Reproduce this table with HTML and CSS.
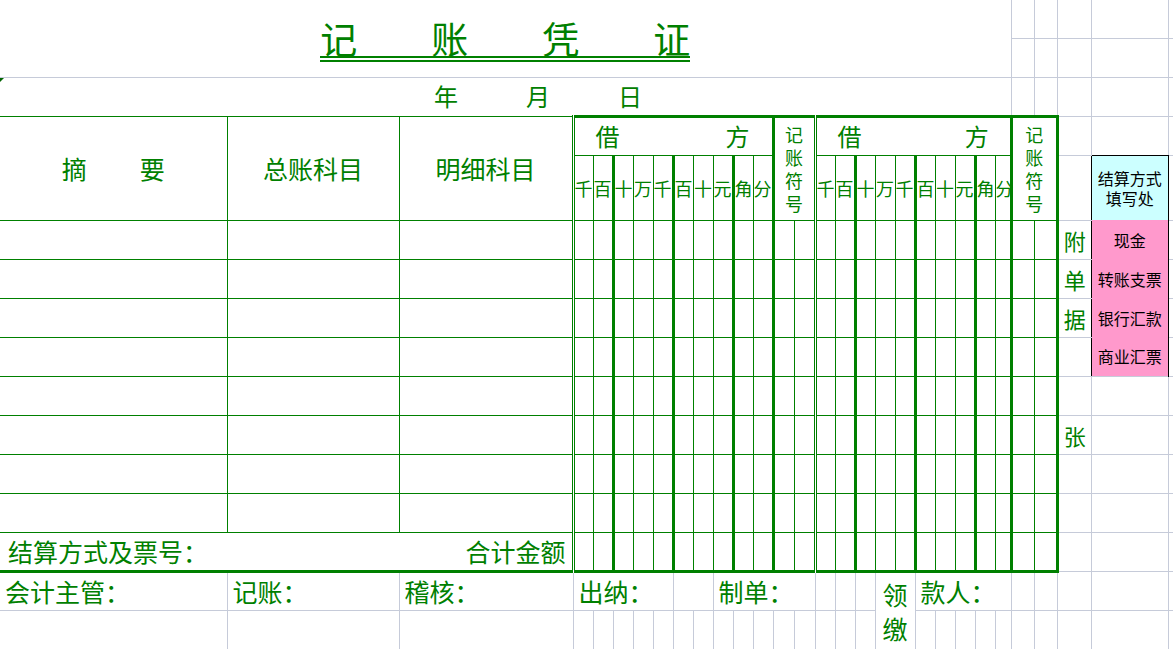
FILE: index.html
```html
<!DOCTYPE html>
<html lang="zh-CN">
<head>
<meta charset="utf-8">
<title>记账凭证</title>
<link rel="stylesheet" href="styles.css">
</head>
<body>
<table class="sheet">
<colgroup>
<col class="wa"><col class="wb"><col class="wc">
<col class="w20" span="10">
<col class="w21" span="2">
<col class="w20" span="9"><col class="w16">
<col class="w23" span="2">
<col class="wf"><col class="ws"><col class="wr">
</colgroup>
<tbody>
<tr class="h38">
<td colspan="25" rowspan="2" class="title-cell"><div class="title-wrap"><span class="title">记　　账　　凭　　证</span></div></td>
<td class="g nt"></td><td class="g nt"></td><td class="g nt"></td><td class="g nt"></td><td class="g nt"></td>
</tr>
<tr class="h39">
<td class="g"></td><td class="g"></td><td class="g"></td><td class="g"></td><td class="g"></td>
</tr>
<tr class="h39">
<td colspan="25" class="date-cell"><span class="tri"></span><div class="date"><span>年</span><span>月</span><span>日</span></div></td>
<td class="g"></td><td class="g"></td><td class="g"></td><td class="g"></td><td class="g"></td>
</tr>
<tr class="h39">
<td rowspan="2" class="c nl hd"><div class="zy"><span>摘</span><span>要</span></div></td>
<td rowspan="2" class="c hd">总账科目</td>
<td rowspan="2" class="c hd">明细科目</td>
<td colspan="10" class="c dl tt tr"><div class="jf"><span>借</span><span>方</span></div></td>
<td colspan="2" rowspan="2" class="c tt vt">记<br>账<br>符<br>号</td>
<td colspan="10" class="c dl tt tr"><div class="jf jf2"><span>借</span><span>方</span></div></td>
<td colspan="2" rowspan="2" class="c tt tr vt">记<br>账<br>符<br>号</td>
<td class="g"></td><td class="g bb"></td><td class="g"></td>
</tr>
<tr class="h65">
<td class="c dl dh">千</td><td class="c tr dh">百</td><td class="c dh">十</td><td class="c dh">万</td><td class="c tr dh">千</td><td class="c dh">百</td><td class="c dh">十</td><td class="c tr dh">元</td><td class="c dh">角</td><td class="c tr dh">分</td>
<td class="c dl dh">千</td><td class="c tr dh">百</td><td class="c dh">十</td><td class="c dh">万</td><td class="c tr dh">千</td><td class="c dh">百</td><td class="c dh">十</td><td class="c tr dh">元</td><td class="c dh">角</td><td class="c tr dh">分</td>
<td class="g br"></td>
<td class="sx">结算方式<br>填写处</td>
<td class="g"></td>
</tr>
<tr class="h39">
<td class="c nl"></td><td class="c"></td><td class="c"></td>
<td class="c dl"></td><td class="c tr"></td><td class="c"></td><td class="c"></td><td class="c tr"></td><td class="c"></td><td class="c"></td><td class="c tr"></td><td class="c"></td><td class="c tr"></td>
<td class="c"></td><td class="c"></td>
<td class="c dl"></td><td class="c tr"></td><td class="c"></td><td class="c"></td><td class="c tr"></td><td class="c"></td><td class="c"></td><td class="c tr"></td><td class="c"></td><td class="c tr"></td>
<td class="c"></td><td class="c tr"></td>
<td class="g br fj">附</td><td class="pk">现金</td><td class="g"></td>
</tr>
<tr class="h39">
<td class="c nl"></td><td class="c"></td><td class="c"></td>
<td class="c dl"></td><td class="c tr"></td><td class="c"></td><td class="c"></td><td class="c tr"></td><td class="c"></td><td class="c"></td><td class="c tr"></td><td class="c"></td><td class="c tr"></td>
<td class="c"></td><td class="c"></td>
<td class="c dl"></td><td class="c tr"></td><td class="c"></td><td class="c"></td><td class="c tr"></td><td class="c"></td><td class="c"></td><td class="c tr"></td><td class="c"></td><td class="c tr"></td>
<td class="c"></td><td class="c tr"></td>
<td class="g br fj">单</td><td class="pk">转账支票</td><td class="g"></td>
</tr>
<tr class="h39">
<td class="c nl"></td><td class="c"></td><td class="c"></td>
<td class="c dl"></td><td class="c tr"></td><td class="c"></td><td class="c"></td><td class="c tr"></td><td class="c"></td><td class="c"></td><td class="c tr"></td><td class="c"></td><td class="c tr"></td>
<td class="c"></td><td class="c"></td>
<td class="c dl"></td><td class="c tr"></td><td class="c"></td><td class="c"></td><td class="c tr"></td><td class="c"></td><td class="c"></td><td class="c tr"></td><td class="c"></td><td class="c tr"></td>
<td class="c"></td><td class="c tr"></td>
<td class="g br fj">据</td><td class="pk">银行汇款</td><td class="g"></td>
</tr>
<tr class="h39">
<td class="c nl"></td><td class="c"></td><td class="c"></td>
<td class="c dl"></td><td class="c tr"></td><td class="c"></td><td class="c"></td><td class="c tr"></td><td class="c"></td><td class="c"></td><td class="c tr"></td><td class="c"></td><td class="c tr"></td>
<td class="c"></td><td class="c"></td>
<td class="c dl"></td><td class="c tr"></td><td class="c"></td><td class="c"></td><td class="c tr"></td><td class="c"></td><td class="c"></td><td class="c tr"></td><td class="c"></td><td class="c tr"></td>
<td class="c"></td><td class="c tr"></td>
<td class="g br fj"></td><td class="pk">商业汇票</td><td class="g"></td>
</tr>
<tr class="h39">
<td class="c nl"></td><td class="c"></td><td class="c"></td>
<td class="c dl"></td><td class="c tr"></td><td class="c"></td><td class="c"></td><td class="c tr"></td><td class="c"></td><td class="c"></td><td class="c tr"></td><td class="c"></td><td class="c tr"></td>
<td class="c"></td><td class="c"></td>
<td class="c dl"></td><td class="c tr"></td><td class="c"></td><td class="c"></td><td class="c tr"></td><td class="c"></td><td class="c"></td><td class="c tr"></td><td class="c"></td><td class="c tr"></td>
<td class="c"></td><td class="c tr"></td>
<td class="g fj"></td><td class="g"></td><td class="g"></td>
</tr>
<tr class="h39">
<td class="c nl"></td><td class="c"></td><td class="c"></td>
<td class="c dl"></td><td class="c tr"></td><td class="c"></td><td class="c"></td><td class="c tr"></td><td class="c"></td><td class="c"></td><td class="c tr"></td><td class="c"></td><td class="c tr"></td>
<td class="c"></td><td class="c"></td>
<td class="c dl"></td><td class="c tr"></td><td class="c"></td><td class="c"></td><td class="c tr"></td><td class="c"></td><td class="c"></td><td class="c tr"></td><td class="c"></td><td class="c tr"></td>
<td class="c"></td><td class="c tr"></td>
<td class="g fj">张</td><td class="g"></td><td class="g"></td>
</tr>
<tr class="h39">
<td class="c nl"></td><td class="c"></td><td class="c"></td>
<td class="c dl"></td><td class="c tr"></td><td class="c"></td><td class="c"></td><td class="c tr"></td><td class="c"></td><td class="c"></td><td class="c tr"></td><td class="c"></td><td class="c tr"></td>
<td class="c"></td><td class="c"></td>
<td class="c dl"></td><td class="c tr"></td><td class="c"></td><td class="c"></td><td class="c tr"></td><td class="c"></td><td class="c"></td><td class="c tr"></td><td class="c"></td><td class="c tr"></td>
<td class="c"></td><td class="c tr"></td>
<td class="g"></td><td class="g"></td><td class="g"></td>
</tr>
<tr class="h39">
<td class="c nl"></td><td class="c"></td><td class="c"></td>
<td class="c dl"></td><td class="c tr"></td><td class="c"></td><td class="c"></td><td class="c tr"></td><td class="c"></td><td class="c"></td><td class="c tr"></td><td class="c"></td><td class="c tr"></td>
<td class="c"></td><td class="c"></td>
<td class="c dl"></td><td class="c tr"></td><td class="c"></td><td class="c"></td><td class="c tr"></td><td class="c"></td><td class="c"></td><td class="c tr"></td><td class="c"></td><td class="c tr"></td>
<td class="c"></td><td class="c tr"></td>
<td class="g"></td><td class="g"></td><td class="g"></td>
</tr>
<tr class="h39">
<td colspan="3" class="c nl tb"><div class="hj"><span>结算方式及票号：</span><span>合计金额</span></div></td>
<td class="c dl tb"></td><td class="c tr tb"></td><td class="c tb"></td><td class="c tb"></td><td class="c tr tb"></td><td class="c tb"></td><td class="c tb"></td><td class="c tr tb"></td><td class="c tb"></td><td class="c tr tb"></td>
<td class="c tb"></td><td class="c tb"></td>
<td class="c dl tb"></td><td class="c tr tb"></td><td class="c tb"></td><td class="c tb"></td><td class="c tr tb"></td><td class="c tb"></td><td class="c tb"></td><td class="c tr tb"></td><td class="c tb"></td><td class="c tr tb"></td>
<td class="c tb"></td><td class="c tr tb"></td>
<td class="g"></td><td class="g"></td><td class="g"></td>
</tr>
<tr class="h39">
<td class="g nl lb">会计主管：</td>
<td class="g lb">记账：</td>
<td class="g lb">稽核：</td>
<td colspan="5" class="g lb">出纳：</td>
<td colspan="2" class="g"></td>
<td colspan="5" class="g lb">制单：</td>
<td class="g"></td><td class="g"></td><td class="g"></td>
<td colspan="2" rowspan="2" class="g lj">领<br>缴</td>
<td colspan="5" class="g lb">款人：</td>
<td class="g"></td><td class="g"></td><td class="g"></td><td class="g"></td><td class="g"></td>
</tr>
<tr class="h39">
<td class="g nl"></td><td class="g"></td><td class="g"></td>
<td class="g"></td><td class="g"></td><td class="g"></td><td class="g"></td><td class="g"></td><td class="g"></td><td class="g"></td><td class="g"></td><td class="g"></td><td class="g"></td>
<td class="g"></td><td class="g"></td>
<td class="g"></td><td class="g"></td><td class="g"></td>
<td class="g"></td><td class="g"></td><td class="g"></td><td class="g"></td><td class="g"></td>
<td class="g"></td><td class="g"></td>
<td class="g"></td><td class="g"></td><td class="g"></td>
</tr>
</tbody>
</table>
</body>
</html>
```

FILE: styles.css
```css
html, body {
  margin: 0;
  padding: 0;
  background: #ffffff;
}
body {
  overflow: hidden;
  font-family: "Noto Sans CJK SC", "Noto Sans CJK JP", sans-serif;
  color: #008000;
}

.sheet {
  border-collapse: collapse;
  table-layout: fixed;
  width: 1208px;
}
.sheet td {
  padding: 0;
  line-height: 1;
  white-space: nowrap;
  vertical-align: middle;
  font-size: 16px;
}

.wa { width: 227px; }
.wb { width: 172px; }
.wc { width: 174px; }
.w20 { width: 20px; }
.w21 { width: 21px; }
.w16 { width: 16px; }
.w23 { width: 23px; }
.wf { width: 34px; }
.ws { width: 77px; }
.wr { width: 40px; }

.h38 { height: 38px; }
.h39 { height: 39px; }
.h65 { height: 65px; }

/* cell border kinds */
.g { border: 1px solid #c6cbd9; }
.c { border: 1px solid #008000; }
.nt { border-top: none; }
.nl { border-left: none; }
.dl { border-left: 3px double #008000; }
.tr { border-right: 3px solid #008000; }
.tt { border-top: 3px solid #008000; }
.tb { border-bottom: 3px solid #008000; }
.bb { border-bottom: 1px solid #000000; }
.br { border-right: 1px solid #000000; }

/* title */
.sheet td.title-cell {
  vertical-align: top;
  border-bottom: 1px solid #c6cbd9;
}
.title-wrap {
  display: flex;
  justify-content: center;
  padding-top: 21px;
}
.title {
  font-size: 37px;
  line-height: 35px;
  border-bottom: 6px double #008000;
}

/* date row */
.date-cell {
  position: relative;
}
.tri {
  position: absolute;
  left: 0;
  top: 0;
  width: 0;
  height: 0;
  border-top: 4px solid #006400;
  border-right: 4px solid transparent;
}
.date {
  display: flex;
  gap: 68px;
  padding-left: 434px;
  font-size: 24px;
}

/* headers */
.sheet td.hd {
  font-size: 25px;
  text-align: center;
}
.zy {
  display: flex;
  justify-content: center;
  gap: 53px;
}
.jf {
  display: flex;
  justify-content: space-between;
  padding: 0 22px 0 21px;
  font-size: 24px;
}
.jf2 {
  padding: 0 21px 0 21px;
}
.sheet td.vt {
  font-size: 18px;
  line-height: 23px;
  text-align: center;
}
.sheet td.dh {
  font-size: 18px;
  text-align: center;
}
.sheet td.fj {
  font-size: 22px;
  text-align: center;
}

/* settlement box */
.sheet td.sx {
  background: #ccffff;
  color: #000000;
  font-size: 16px;
  line-height: 20px;
  text-align: center;
  border-top: 1px solid #000000;
  border-left: 1px solid #000000;
  border-right: 1px solid #000000;
}
.sheet td.pk {
  background: #ff99cc;
  color: #000000;
  font-size: 16px;
  text-align: center;
  border-left: 1px solid #000000;
  border-right: 1px solid #000000;
}

/* totals and signatures */
.hj {
  display: flex;
  justify-content: space-between;
  padding: 0 6px 0 8px;
  font-size: 25px;
}
.sheet td.lb {
  font-size: 25px;
  padding-left: 5px;
}
.sheet td.lj {
  font-size: 25px;
  line-height: 34px;
  text-align: center;
}
```
